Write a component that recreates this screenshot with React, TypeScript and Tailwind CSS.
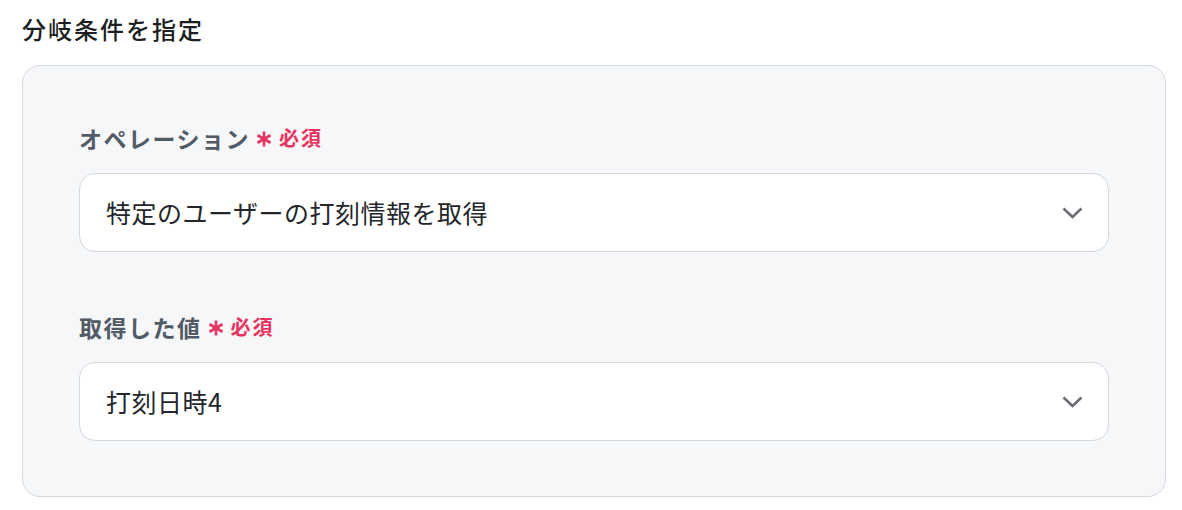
import { ReactNode } from 'react';

const font = { fontFamily: '"Noto Sans CJK JP", "Noto Sans", sans-serif' };

function Required() {
  return (
    <span className="ml-[6px] inline-flex items-center gap-[7px] text-[#e8335e]">
      <svg width="16" height="16" viewBox="0 0 16 16" className="mt-[2px]">
        <g stroke="currentColor" strokeWidth="2.6" strokeLinecap="butt">
          <line x1="8" y1="0.5" x2="8" y2="15.5" />
          <line x1="1.5" y1="4.25" x2="14.5" y2="11.75" />
          <line x1="1.5" y1="11.75" x2="14.5" y2="4.25" />
        </g>
      </svg>
      <span className="text-[20px] font-bold tracking-[2px]">必須</span>
    </span>
  );
}

function Field({ label, value }: { label: ReactNode; value: string }) {
  return (
    <div className="flex flex-col gap-[20px]">
      <div className="flex h-[30px] items-center text-[23px] font-bold tracking-[1.5px] text-[#525a66]">
        {label}
        <Required />
      </div>
      <div className="flex h-[79px] items-center justify-between rounded-[16px] border border-[#d3d8e0] bg-white pl-[26px] pr-[25px]">
        <span className="text-[25px] tracking-[0.5px] text-[#23262b]">{value}</span>
        <svg width="21" height="12" viewBox="0 0 21 12" className="text-[#6b6e74]">
          <polyline
            points="1.5,1.5 10.5,10 19.5,1.5"
            fill="none"
            stroke="currentColor"
            strokeWidth="2.6"
          />
        </svg>
      </div>
    </div>
  );
}

export default function App() {
  return (
    <div className="min-h-[510px] bg-white px-[22px] pt-[11px]" style={font}>
      <h2 className="h-[36px] text-[24px] font-medium leading-[36px] tracking-[2px] text-[#1d1f22]">
        分岐条件を指定
      </h2>
      <div className="mt-[18px] flex w-[1144px] flex-col gap-[60px] rounded-[18px] border border-[#d3d8e0] bg-[#f6f7f9] px-[56px] pb-[55px] pt-[57px]">
        <Field label="オペレーション" value="特定のユーザーの打刻情報を取得" />
        <Field label="取得した値" value="打刻日時4" />
      </div>
    </div>
  );
}
